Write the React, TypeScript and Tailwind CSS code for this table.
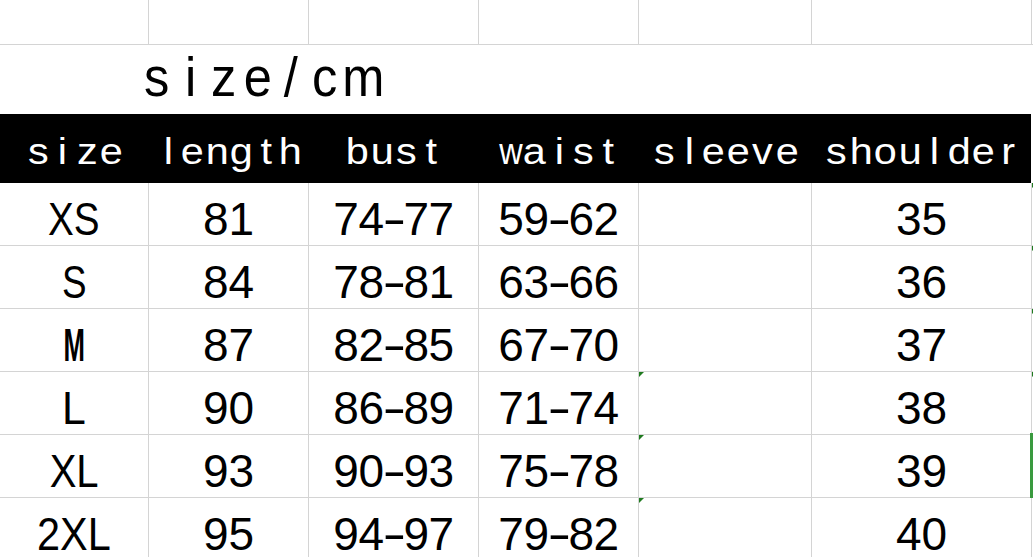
import React from "react";

const colW = ["w-[149px]", "w-[160px]", "w-[170px]", "w-[160px]", "w-[173px]", "w-[220px]"];
const line = "border-[#d4d4d4]";

type Row = {
  size: string;
  sc: string;
  length: string;
  bust: string;
  waist: string;
  shoulder: string;
  sleeveMark: boolean;
  edgeMark: boolean;
  selected: boolean;
};

const rows: Row[] = [
  { size: "XS", sc: "scale-x-[0.84]", length: "81", bust: "74-77", waist: "59-62", shoulder: "35", sleeveMark: false, edgeMark: true, selected: false },
  { size: "S", sc: "scale-x-[0.8]", length: "84", bust: "78-81", waist: "63-66", shoulder: "36", sleeveMark: false, edgeMark: true, selected: false },
  { size: "M", sc: "scale-x-[0.56] font-bold", length: "87", bust: "82-85", waist: "67-70", shoulder: "37", sleeveMark: false, edgeMark: true, selected: false },
  { size: "L", sc: "scale-x-[0.93]", length: "90", bust: "86-89", waist: "71-74", shoulder: "38", sleeveMark: true, edgeMark: true, selected: false },
  { size: "XL", sc: "scale-x-[0.87]", length: "93", bust: "90-93", waist: "75-78", shoulder: "39", sleeveMark: true, edgeMark: false, selected: true },
  { size: "2XL", sc: "scale-x-[0.9]", length: "95", bust: "94-97", waist: "79-82", shoulder: "40", sleeveMark: true, edgeMark: false, selected: false },
];

const headers = ["size", "length", "bust", "waist", "sleeve", "shoulder"];

function Mark() {
  return (
    <span className="absolute left-0 top-0 w-0 h-0 border-t-[5px] border-t-[#1f7a1f] border-r-[5px] border-r-transparent" />
  );
}

function HeaderWord({ text }: { text: string }) {
  return (
    <span className="flex">
      {text.split("").map((c, i) => (
        <span
          key={i}
          className={
            "inline-block w-[24.5px] text-center " + (c === "w" ? "scale-x-[0.9]" : "scale-x-[1.15]")
          }
        >
          {c}
        </span>
      ))}
    </span>
  );
}

function Title({ text }: { text: string }) {
  return (
    <span className="flex">
      {text.split("").map((c, i) => (
        <span key={i} className="inline-block w-[33.5px] text-center scale-x-[0.92]">
          {c}
        </span>
      ))}
    </span>
  );
}

function Num({ text }: { text: string }) {
  const parts = text.split("-");
  if (parts.length === 1) return <span>{text}</span>;
  return (
    <span className="flex tracking-[-0.5px]">
      <span>{parts[0]}</span>
      <span className="inline-block w-[20px] text-center scale-x-[1.55]">-</span>
      <span>{parts[1]}</span>
    </span>
  );
}

export default function App() {
  return (
    <div className="w-[1033px] h-[557px] overflow-hidden bg-white text-black font-['Liberation_Sans',Arial,sans-serif]">
      {/* top empty spreadsheet row */}
      <div className={"flex h-[45px] border-b " + line}>
        {colW.map((w, i) => (
          <div key={i} className={"h-full border-r " + line + " " + w} />
        ))}
        <div className="flex-1" />
      </div>

      {/* title row */}
      <div className="flex h-[69px] pl-[140px] pt-[5px] text-[55px] leading-[55px]">
        <Title text="size/cm" />
      </div>

      {/* header row */}
      <div className="flex h-[69px]">
        <div className="flex w-[1031px] h-full overflow-hidden bg-black text-white text-[36px] leading-[36px]">
          {headers.map((h, i) => (
            <div key={i} className={"flex shrink-0 justify-center pt-[20px] " + colW[i]}>
              <HeaderWord text={h} />
            </div>
          ))}
        </div>
        <div className="flex-1" />
      </div>

      {/* body rows */}
      {rows.map((r, ri) => {
        const vals = [r.size, r.length, r.bust, r.waist, "", r.shoulder];
        return (
          <div key={ri} className={"relative flex h-[63px] border-b text-[46px] leading-[46px] " + line}>
            {vals.map((v, ci) => (
              <div
                key={ci}
                className={"relative flex shrink-0 justify-center pt-[13px] h-full border-r " + line + " " + colW[ci]}
              >
                {ci === 4 && r.sleeveMark && <Mark />}
                {ci === 0 ? <span className={"inline-block " + r.sc}>{v}</span> : v ? <Num text={v} /> : null}
              </div>
            ))}
            <div className="relative flex-1 h-full">{r.edgeMark && <Mark />}</div>
            {r.selected && <div className="absolute right-0 top-[-2px] w-[3px] h-[65px] bg-[#3a9a3f]" />}
          </div>
        );
      })}
    </div>
  );
}
